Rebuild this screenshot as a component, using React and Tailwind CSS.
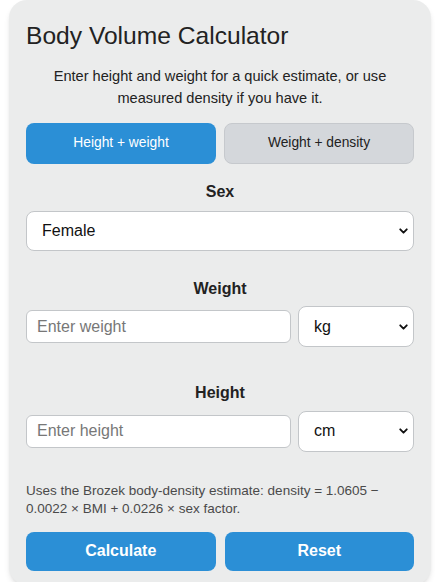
import { useState } from "react";
import { ChevronDown } from "lucide-react";

const Select = ({ value, onChange, options, className }) => (
	<div className={`relative ${className}`}>
		<select
			value={value}
			onChange={(e) => onChange(e.target.value)}
			className="appearance-none w-full h-full bg-white border border-[#c3c6c9] rounded-lg pl-[15px] pr-8 text-[16px] text-[#111] outline-none"
		>
			{options.map((o) => (
				<option key={o} value={o}>
					{o}
				</option>
			))}
		</select>
		<ChevronDown
			size={13}
			strokeWidth={3.5}
			className="absolute right-[4px] top-1/2 -translate-y-1/2 pointer-events-none text-[#111]"
		/>
	</div>
);

const App = () => {
	const [mode, setMode] = useState("hw");
	const [sex, setSex] = useState("Female");
	const [weightUnit, setWeightUnit] = useState("kg");
	const [heightUnit, setHeightUnit] = useState("cm");
	const [weight, setWeight] = useState("");
	const [height, setHeight] = useState("");

	const handleReset = () => {
		setWeight("");
		setHeight("");
		setSex("Female");
		setWeightUnit("kg");
		setHeightUnit("cm");
	};

	return (
		<div className="min-h-screen bg-white font-['Liberation_Sans',Arial,sans-serif] text-[#222]">
			<div className="ml-[9px] w-[422px] rounded-[18px] bg-[#ebecec] shadow-md px-[17px] pt-[22px] pb-[14px]">
				<h1 className="text-[24.6px] leading-[28px] text-[#222]">Body Volume Calculator</h1>
				<p className="mt-[15px] text-[14.6px] leading-[22px] text-center">
					Enter height and weight for a quick estimate, or use measured density if
					you have it.
				</p>

				<div className="mt-[14px] grid grid-cols-2 gap-2 h-[41px]">
					<button
						onClick={() => setMode("hw")}
						className={`rounded-lg text-[13.8px] ${
							mode === "hw"
								? "bg-[#2b8fd6] text-white"
								: "bg-[#d4d7db] border border-[#c6c9cd] text-[#222]"
						}`}
					>
						Height + weight
					</button>
					<button
						onClick={() => setMode("wd")}
						className={`rounded-lg text-[13.8px] ${
							mode === "wd"
								? "bg-[#2b8fd6] text-white"
								: "bg-[#d4d7db] border border-[#c6c9cd] text-[#222]"
						}`}
					>
						Weight + density
					</button>
				</div>

				<label className="block mt-[17.5px] text-center font-bold text-[16px] leading-[20px]">
					Sex
				</label>
				<Select
					value={sex}
					onChange={setSex}
					options={["Female", "Male"]}
					className="mt-[9.5px] h-[40px]"
				/>

				<label className="block mt-[27.5px] text-center font-bold text-[16px] leading-[20px]">
					Weight
				</label>
				<div className="mt-[7.5px] flex items-center gap-[7px] h-[41px]">
					<input
						type="number"
						placeholder="Enter weight"
						value={weight}
						onChange={(e) => setWeight(e.target.value)}
						className="flex-1 min-w-0 h-[33px] bg-white border border-[#c3c6c9] rounded-md px-[10px] text-[16px] placeholder:text-[#777] outline-none"
					/>
					<Select
						value={weightUnit}
						onChange={setWeightUnit}
						options={["kg", "lb"]}
						className="w-[116px] h-[41px]"
					/>
				</div>

				<label className="block mt-[35.5px] text-center font-bold text-[16px] leading-[20px]">
					Height
				</label>
				<div className="mt-[8px] flex items-center gap-[7px] h-[41px]">
					<input
						type="number"
						placeholder="Enter height"
						value={height}
						onChange={(e) => setHeight(e.target.value)}
						className="flex-1 min-w-0 h-[33px] bg-white border border-[#c3c6c9] rounded-md px-[10px] text-[16px] placeholder:text-[#777] outline-none"
					/>
					<Select
						value={heightUnit}
						onChange={setHeightUnit}
						options={["cm", "in"]}
						className="w-[116px] h-[41px]"
					/>
				</div>

				<p className="mt-[30.5px] text-[13.5px] leading-[17.5px] text-[#4a4a4a]">
					Uses the Brozek body-density estimate: density = 1.0605 − 0.0022 × BMI +
					0.0226 × sex factor.
				</p>

				<div className="mt-[14.5px] grid grid-cols-2 gap-[9px] h-[39px]">
					<button className="rounded-lg bg-[#2b8fd6] text-white font-bold text-[16px]">
						Calculate
					</button>
					<button
						onClick={handleReset}
						className="rounded-lg bg-[#2b8fd6] text-white font-bold text-[16px]"
					>
						Reset
					</button>
				</div>
			</div>
		</div>
	);
};

export default App;
